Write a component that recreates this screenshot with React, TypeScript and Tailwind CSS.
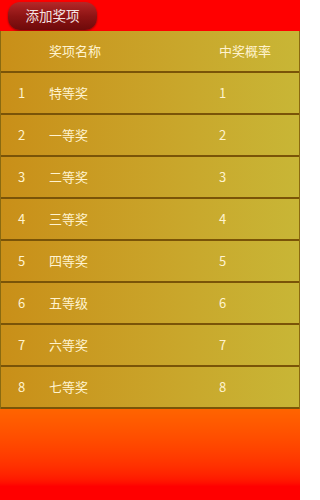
const rows = [
  { id: 1, name: '特等奖', rate: 1 },
  { id: 2, name: '一等奖', rate: 2 },
  { id: 3, name: '二等奖', rate: 3 },
  { id: 4, name: '三等奖', rate: 4 },
  { id: 5, name: '四等奖', rate: 5 },
  { id: 6, name: '五等级', rate: 6 },
  { id: 7, name: '六等奖', rate: 7 },
  { id: 8, name: '七等奖', rate: 8 },
]

function Row({ no, name, rate }: { no: string | number; name: string; rate: string | number }) {
  return (
    <div className="flex h-[42px] items-center border-b-2 border-[#7a5408] text-[13px] text-[#fff3cf]">
      <span className="w-[48px] pl-[17px]">{no}</span>
      <span className="w-[170px]">{name}</span>
      <span>{rate}</span>
    </div>
  )
}

export default function App() {
  return (
    <div
      className="flex h-[500px] w-[300px] flex-col bg-[#ff0000]"
      style={{ fontFamily: '"Noto Sans CJK SC", Roboto, sans-serif' }}
    >
      {/* Top bar */}
      <div className="flex h-[31px] shrink-0 items-center pl-[8px]">
        <button className="flex h-[28px] w-[89px] items-center justify-center rounded-[12px] bg-gradient-to-b from-[#b52828] via-[#8e1414] to-[#6e0a0a] text-[13.5px] text-[#f3e3e3] shadow-[0_1px_2px_rgba(0,0,0,0.4)]">
          添加奖项
        </button>
      </div>

      {/* Prize table */}
      <div className="shrink-0 border-x border-[#8a6a10] bg-gradient-to-r from-[#c98f18] to-[#c8b636]">
        <Row no="" name="奖项名称" rate="中奖概率" />
        {rows.map(r => (
          <Row key={r.id} no={r.id} name={r.name} rate={r.rate} />
        ))}
      </div>

      {/* Bottom fill */}
      <div className="flex-1 bg-gradient-to-b from-[#ff6400] to-[#ff0000] to-[85%]" />
    </div>
  )
}
